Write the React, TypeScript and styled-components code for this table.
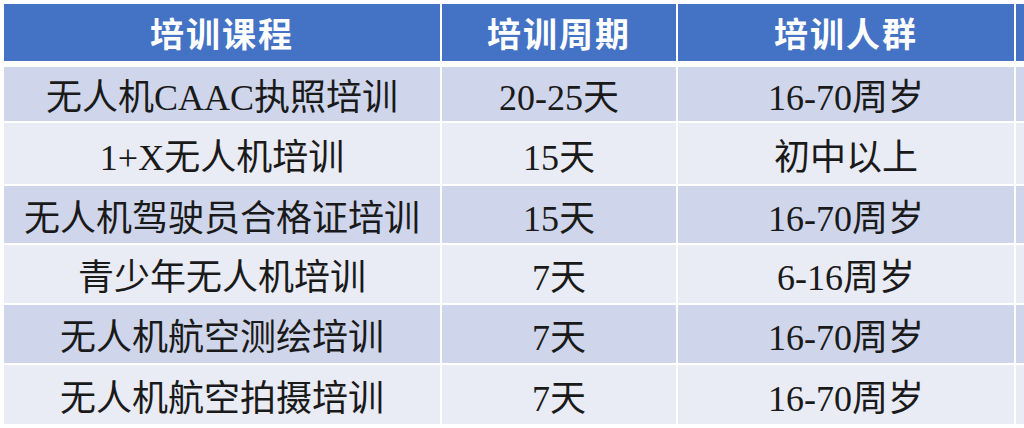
import React from "react";
import styled, { createGlobalStyle } from "styled-components";

type Course = {
  name: string;
  period: string;
  people: string;
};

const courses: Course[] = [
  { name: "无人机CAAC执照培训", period: "20-25天", people: "16-70周岁" },
  { name: "1+X无人机培训", period: "15天", people: "初中以上" },
  { name: "无人机驾驶员合格证培训", period: "15天", people: "16-70周岁" },
  { name: "青少年无人机培训", period: "7天", people: "6-16周岁" },
  { name: "无人机航空测绘培训", period: "7天", people: "16-70周岁" },
  { name: "无人机航空拍摄培训", period: "7天", people: "16-70周岁" },
];

const headers = ["培训课程", "培训周期", "培训人群", ""];

const App = () => (
  <Page>
    <GlobalStyle />
    <Table>
      {headers.map((h, i) => (
        <HeadCell key={i}>{h}</HeadCell>
      ))}
      {courses.map((c, i) => (
        <React.Fragment key={c.name}>
          <Cell $odd={i % 2 === 0}>{c.name}</Cell>
          <Cell $odd={i % 2 === 0}>{c.period}</Cell>
          <Cell $odd={i % 2 === 0}>{c.people}</Cell>
          <Cell $odd={i % 2 === 0} />
        </React.Fragment>
      ))}
    </Table>
  </Page>
);

export default App;

const GlobalStyle = createGlobalStyle`
  html, body {
    margin: 0;
    padding: 0;
    background: #ffffff;
  }
`;

const Page = styled.div`
  width: 1024px;
  height: 428px;
  overflow: hidden;
  padding: 4px 0 0 4px;
  box-sizing: border-box;
  background: #ffffff;
`;

const Table = styled.div`
  display: grid;
  grid-template-columns: 436px 234px 336px 200px;
  grid-template-rows: 61px 54px 61px 57px 58px 58px 59px;
  gap: 2px;
  width: max-content;
`;

const HeadCell = styled.div`
  display: flex;
  align-items: center;
  justify-content: center;
  margin-bottom: 4px;
  background: #4472c4;
  color: #ffffff;
  font-family: "Noto Sans CJK SC", "Liberation Sans", sans-serif;
  font-weight: 700;
  font-size: 34px;
  letter-spacing: 2px;
`;

const Cell = styled.div<{ $odd: boolean }>`
  display: flex;
  align-items: center;
  justify-content: center;
  background: ${(p) => (p.$odd ? "#cfd5ea" : "#e9ebf5")};
  color: #1a1a1a;
  font-family: "Liberation Serif", "Noto Sans CJK SC", serif;
  font-size: 36px;
  white-space: nowrap;
`;
